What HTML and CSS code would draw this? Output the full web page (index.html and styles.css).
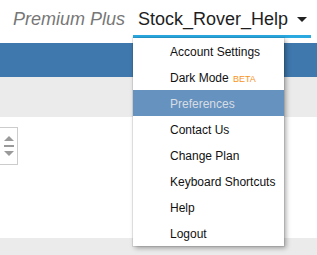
FILE: index.html
```html
<!DOCTYPE html>
<html lang="en">
<head>
  <meta charset="UTF-8">
  <meta name="viewport" content="width=device-width, initial-scale=1">
  <title>Stock Rover</title>
  <link rel="stylesheet" href="styles.css">
</head>
<body>

  <div class="cabecera">
    <span class="plan">Premium Plus</span>
    <div class="usuario">
      <span class="nombre">Stock_Rover_Help</span>
      <span class="flecha"></span>
    </div>
    <ul class="menu">
      <li>Account Settings</li>
      <li>Dark Mode <span class="beta">BETA</span></li>
      <li class="activo">Preferences</li>
      <li>Contact Us</li>
      <li>Change Plan</li>
      <li>Keyboard Shortcuts</li>
      <li>Help</li>
      <li>Logout</li>
    </ul>
  </div>

  <div class="barra-azul"></div>
  <div class="barra-gris"></div>

  <div class="contenido">
    <div class="spinner">
      <span class="sube"></span>
      <span class="raya"></span>
      <span class="baja"></span>
    </div>
  </div>

  <div class="pie"></div>

</body>
</html>
```

FILE: styles.css
```css
body {
  margin: 0;
  font-family: "Liberation Sans", Arial, sans-serif;
  background: #ffffff;
  overflow: hidden;
}

.cabecera {
  position: relative;
  height: 34px;
  padding-top: 9px;
  display: flex;
  justify-content: flex-end;
  align-items: flex-start;
  padding-right: 6px;
}

.plan {
  font-size: 18px;
  line-height: 20px;
  font-style: italic;
  color: #777777;
  margin-right: 8px;
}

.usuario {
  display: flex;
  align-items: center;
  width: 169px;
  padding: 0 4px 6px 5px;
  border-bottom: 3px solid #2aa8e0;
}

.nombre {
  font-size: 18px;
  line-height: 20px;
  color: #1e1e1e;
  flex: 1;
}

.flecha {
  width: 0;
  height: 0;
  border-left: 5px solid transparent;
  border-right: 5px solid transparent;
  border-top: 5px solid #222222;
  margin-top: 1px;
}

.menu {
  position: absolute;
  top: 38px;
  left: 133px;
  width: 151px;
  margin: 0;
  padding: 0;
  list-style: none;
  background: #ffffff;
  box-shadow: 0 0 0 1px rgba(0, 0, 0, 0.08), 2px 2px 5px rgba(0, 0, 0, 0.35);
  z-index: 2;
}

.menu li {
  height: 25px;
  padding-top: 1px;
  line-height: 26px;
  padding-left: 37px;
  font-size: 12px;
  color: #111111;
}

.menu li.activo {
  background: #6592bf;
  color: #d8dde4;
}

.beta {
  font-size: 9px;
  color: #f7941d;
  margin-left: 1px;
}

.barra-azul {
  height: 34px;
  background: #3f78ad;
}

.barra-gris {
  height: 40px;
  background: #ebebeb;
}

.contenido {
  height: 121px;
  padding-top: 10px;
  box-sizing: border-box;
}

.spinner {
  width: 17px;
  height: 36px;
  border: 1px solid #cccccc;
  border-left: none;
  display: flex;
  flex-direction: column;
  align-items: center;
  justify-content: center;
  gap: 4px;
}

.sube, .baja {
  width: 0;
  height: 0;
  border-left: 5px solid transparent;
  border-right: 5px solid transparent;
}

.sube {
  border-bottom: 5px solid #9a9a9a;
}

.baja {
  border-top: 5px solid #9a9a9a;
}

.raya {
  width: 10px;
  height: 2px;
  background: #9a9a9a;
}

.pie {
  height: 17px;
  background: #ebebeb;
}
```
